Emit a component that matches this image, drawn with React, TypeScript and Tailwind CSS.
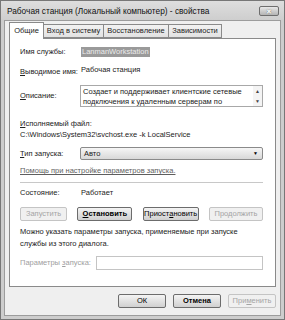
import React from "react";

const font = { fontFamily: '"Liberation Sans", Arial, sans-serif' };

function Btn({
  children,
  disabled,
  w,
  bold,
}: {
  children: React.ReactNode;
  disabled?: boolean;
  w: string;
  bold?: boolean;
}) {
  return (
    <div
      className={`${w} flex h-[14px] items-center justify-center whitespace-nowrap rounded-[2px] border ${
        disabled
          ? "border-[#c4c4c4] bg-[#f0f0f0] text-[#a4a4a4]"
          : "border-[#6c6c6c] bg-gradient-to-b from-[#f4f4f4] to-[#d0d0d0] text-black"
      } ${bold ? "font-bold" : ""}`}
    >
      {children}
    </div>
  );
}

export default function App() {
  return (
    <div
      style={font}
      className="flex h-[320px] w-[285px] flex-col border border-[#777] bg-[#cdcdcd] text-[7.5px] text-[#222]"
    >
      {/* title bar */}
      <div className="flex h-[19px] shrink-0 items-center justify-between bg-gradient-to-b from-[#dedede] to-[#cecece] pl-[6px] pr-[5px] pt-[1px]">
        <span className="whitespace-nowrap text-[8.3px] text-[#111]">
          Рабочая станция (Локальный компьютер) - свойства
        </span>
        <div className="flex h-[10px] w-[20px] items-center justify-center rounded-[2px] border border-[#6e6e6e] bg-gradient-to-b from-[#e8e8e8] to-[#b4b4b4]">
          <span className="text-[7px] font-bold leading-none text-white [text-shadow:0_0_1px_#444]">✕</span>
        </div>
      </div>

      <div className="mx-[3px] mb-[3px] flex flex-1 flex-col border border-[#9c9c9c] bg-[#efefef] px-[4px] pt-[1px]">
        {/* tabs */}
        <div className="relative z-10 flex h-[16px] shrink-0 items-end">
          <div className="-mb-[1px] flex h-[17px] w-[35px] items-center justify-center border border-b-0 border-[#8a8a8a] bg-white">
            Общие
          </div>
          <div className="flex h-[14px] w-[60px] items-center justify-center whitespace-nowrap border border-l-0 border-[#8a8a8a] bg-gradient-to-b from-[#f2f2f2] to-[#e2e2e2]">
            Вход в систему
          </div>
          <div className="flex h-[14px] w-[65px] items-center justify-center whitespace-nowrap border border-l-0 border-[#8a8a8a] bg-gradient-to-b from-[#f2f2f2] to-[#e2e2e2]">
            Восстановление
          </div>
          <div className="flex h-[14px] w-[53px] items-center justify-center whitespace-nowrap border border-l-0 border-[#8a8a8a] bg-gradient-to-b from-[#f2f2f2] to-[#e2e2e2]">
            Зависимости
          </div>
        </div>

        {/* panel */}
        <div className="flex h-[249px] shrink-0 flex-col border border-[#8a8a8a] bg-white pl-[10px] pr-[12px] pt-[7px]">
          <div className="flex h-[12px] items-center">
            <span className="w-[61px] whitespace-nowrap">Имя службы:</span>
            <span className="bg-[#9a9a9a] px-[1px] leading-[10px] text-[#ececec]">LanmanWorkstation</span>
          </div>
          <div className="mt-[7px] flex h-[12px] items-center">
            <span className="w-[61px] whitespace-nowrap pt-[2px]">
              <u>В</u>ыводимое имя:
            </span>
            <span className="-mt-[2px]">Рабочая станция</span>
          </div>
          <div className="mt-[8px] flex items-start">
            <span className="w-[60px] whitespace-nowrap pt-[5px]">
              <u>О</u>писание:
            </span>
            <div className="flex h-[22px] flex-1 border border-[#a8a8a8]">
              <div className="flex-1 overflow-hidden pl-[2px] pt-[1px] leading-[10px]">
                Создает и поддерживает клиентские сетевые подключения к удаленным серверам по
              </div>
              <div className="flex w-[9px] flex-col items-center justify-between bg-[#f4f4f4] pb-[2px] pt-[3px] text-[5px] leading-none text-[#444]">
                <span>▲</span>
                <span>▼</span>
              </div>
            </div>
          </div>
          <div className="mt-[11px] flex h-[11px] items-center whitespace-nowrap">
            <span>
              <u>И</u>сполняемый файл:
            </span>
          </div>
          <div className="flex h-[11px] items-center whitespace-nowrap">
            C:\Windows\System32\svchost.exe -k LocalService
          </div>

          <div className="mt-[7px] flex items-center">
            <span className="w-[60px] whitespace-nowrap">
              <u>Т</u>ип запуска:
            </span>
            <div className="flex h-[13px] flex-1 items-center justify-between rounded-[2px] border border-[#8a8a8a] bg-gradient-to-b from-[#f6f6f6] to-[#d8d8d8] pl-[3px] pr-[4px]">
              <span>Авто</span>
              <span className="text-[5px] text-black">▼</span>
            </div>
          </div>
          <div className="mt-[5px] flex h-[12px] items-center whitespace-nowrap text-[#5e5e5e] underline">
            Помощь при настройке параметров запуска.
          </div>
          <div className="mt-[5px] h-[2px] border-b border-t border-b-white border-t-[#c8c8c8]" />

          <div className="mt-[3px] flex h-[12px] items-center">
            <span className="w-[61px]">Состояние:</span>
            <span>Работает</span>
          </div>
          <div className="mt-[8px] flex items-center justify-between">
            <Btn w="w-[47px]" disabled>
              Запустить
            </Btn>
            <Btn w="w-[55px]" bold>
              <u>О</u>становить
            </Btn>
            <Btn w="w-[56px]">
              Приост<u>а</u>новить
            </Btn>
            <Btn w="w-[54px]" disabled>
              Продолжить
            </Btn>
          </div>

          <div className="mt-[5px] leading-[12px]">
            Можно указать параметры запуска, применяемые при запуске
            <br />
            службы из этого диалога.
          </div>
          <div className="mt-[6px] flex items-center">
            <span className="w-[76px] whitespace-nowrap text-[#a0a0a0]">
              Параметры <u>з</u>апуска:
            </span>
            <div className="h-[14px] flex-1 border border-[#c4c4c4] bg-white" />
          </div>
        </div>

        {/* bottom buttons */}
        <div className="mt-[7px] flex justify-end gap-[7px]">
          <Btn w="w-[48px]">ОК</Btn>
          <Btn w="w-[48px]" bold>
            Отмена
          </Btn>
          <Btn w="w-[48px]" disabled>
            При<u>м</u>енить
          </Btn>
        </div>
      </div>
    </div>
  );
}
